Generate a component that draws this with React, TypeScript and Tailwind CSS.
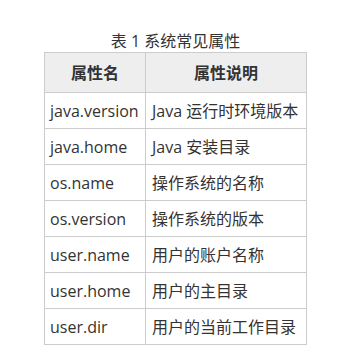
const rows: [string, string][] = [
  ["java.version", "Java 运行时环境版本"],
  ["java.home", "Java 安装目录"],
  ["os.name", "操作系统的名称"],
  ["os.version", "操作系统的版本"],
  ["user.name", "用户的账户名称"],
  ["user.home", "用户的主目录"],
  ["user.dir", "用户的当前工作目录"],
];

export default function App() {
  return (
    <div className="w-[351px] h-[358px] bg-white pt-[30px] text-[#333] font-['Open_Sans','Noto_Sans_CJK_SC',sans-serif]">
      <div className="text-center text-[16px] leading-[22px]">表 1 系统常见属性</div>
      <table className="mx-auto border-collapse text-[16px]">
        <thead>
          <tr className="bg-[#eeeeee]">
            <th className="w-[101px] h-[40px] border border-[#cccccc] font-bold text-center">属性名</th>
            <th className="w-[161px] h-[40px] border border-[#cccccc] font-bold text-center">属性说明</th>
          </tr>
        </thead>
        <tbody>
          {rows.map(([k, v]) => (
            <tr key={k}>
              <td className="h-[36px] border border-[#cccccc] pl-[5px] pr-0 whitespace-nowrap">{k}</td>
              <td className="h-[36px] border border-[#cccccc] pl-[6px] pr-0 whitespace-nowrap">{v}</td>
            </tr>
          ))}
        </tbody>
      </table>
    </div>
  );
}
